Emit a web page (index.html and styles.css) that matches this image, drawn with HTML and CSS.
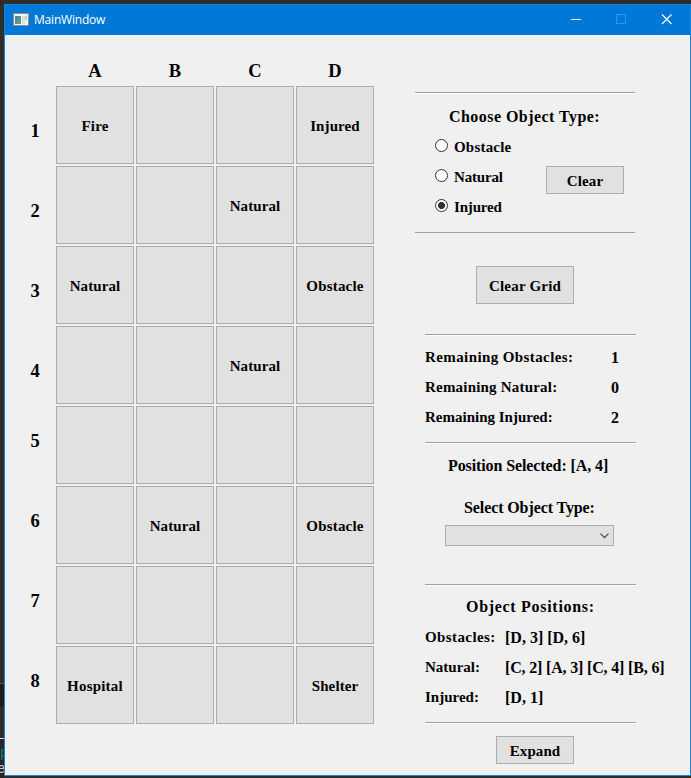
FILE: index.html
```html
<!DOCTYPE html>
<html lang="en">
<head>
<meta charset="utf-8">
<title>MainWindow</title>
<link rel="stylesheet" href="styles.css">
</head>
<body>
<div class="behind"><span class="behind-p">p</span><span class="behind-e">e</span></div>
<div class="window">
  <header class="titlebar">
    <svg class="app-icon" width="16" height="14" viewBox="0 0 16 14">
      <defs><linearGradient id="g" x1="0" y1="0" x2="1" y2="1"><stop offset="0" stop-color="#5078a8"/><stop offset="1" stop-color="#5cae78"/></linearGradient></defs>
      <rect x="0.5" y="0.5" width="15" height="12" fill="#f4f4f4" stroke="#8b8f94"/>
      <rect x="2" y="3" width="6" height="8" fill="url(#g)"/>
      <rect x="9" y="3" width="3" height="8" fill="#dcdedd"/>
      <rect x="12" y="3" width="2" height="4" fill="#b4d8bc"/>
    </svg>
    <span class="title">MainWindow</span>
    <svg class="controls" width="110" height="12" viewBox="0 0 110 12">
      <path d="M0 5.5H10" stroke="#fff"/>
      <rect x="45.500" y="0.500" width="9" height="9" fill="none" stroke="#3394e1"/>
      <path d="M91 .5L100.500 10M100.500 .5L91 10" stroke="#fff" stroke-width="1.150"/>
    </svg>
  </header>
  <main class="content">
    <section class="board">
      <div class="cols"><span>A</span><span>B</span><span>C</span><span>D</span></div>
      <div class="rows"><span>1</span><span>2</span><span>3</span><span>4</span><span>5</span><span>6</span><span>7</span><span>8</span></div>
      <div class="cells">
        <button>Fire</button><button></button><button></button><button>Injured</button>
        <button></button><button></button><button>Natural</button><button></button>
        <button>Natural</button><button></button><button></button><button class="wide">Obstacle</button>
        <button></button><button></button><button>Natural</button><button></button>
        <button></button><button></button><button></button><button></button>
        <button></button><button>Natural</button><button></button><button class="wide">Obstacle</button>
        <button></button><button></button><button></button><button></button>
        <button class="wide">Hospital</button><button></button><button></button><button>Shelter</button>
      </div>
    </section>
    <aside class="side">
      <section class="choose">
        <h2 class="choose-title">Choose Object Type:</h2>
        <div class="choose-body">
          <div class="radios">
            <label class="wide"><i class="radio"></i>Obstacle</label>
            <label class="tight"><i class="radio"></i>Natural</label>
            <label class="tight"><i class="radio on"></i>Injured</label>
          </div>
          <button class="clear">Clear</button>
        </div>
      </section>
      <button class="clear-grid">Clear Grid</button>
      <section class="remaining">
        <div><span class="wider">Remaining Obstacles:</span><b>1</b></div>
        <div><span class="wide">Remaining Natural:</span><b>0</b></div>
        <div><span>Remaining Injured:</span><b>2</b></div>
      </section>
      <section class="select">
        <p class="selected">Position Selected: [A, 4]</p>
        <p class="select-label">Select Object Type:</p>
        <div class="combo"><svg width="9" height="6" viewBox="0 0 9 6"><path d="M.5 .7L4.500 4.700L8.500 .7" fill="none" stroke="#444" stroke-width="1.150"/></svg></div>
      </section>
      <section class="positions">
        <h2 class="positions-title">Object Positions:</h2>
        <div><span class="wider">Obstacles:</span><b>[D, 3] [D, 6]</b></div>
        <div><span>Natural:</span><b class="tight">[C, 2] [A, 3] [C, 4] [B, 6]</b></div>
        <div><span>Injured:</span><b>[D, 1]</b></div>
      </section>
      <button class="expand">Expand</button>
    </aside>
  </main>
</div>
</body>
</html>
```
FILE: styles.css
```css
* { box-sizing: border-box; }
body {
  margin: 0;
  width: 691px;
  height: 778px;
  overflow: hidden;
  position: relative;
  padding: 4px 0 0 4px;
  background: #2d2d2d;
  font: bold 15px/20px "Liberation Serif", serif;
  color: #000;
}
.behind {
  position: absolute;
  left: 0;
  top: 683px;
  width: 4px;
  height: 95px;
  overflow: hidden;
  border-top: 1px solid #555;
  background: linear-gradient(#1e1e1e 0 23px, #2d2d2d 23px 54px, #ddd 54px 55px, #252525 55px);
  font: 14px/16px "Liberation Mono", monospace;
}
.behind span { display: block; }
.behind-p { margin-top: 61px; color: #008080; }
.behind-e { margin-left: -3px; color: #ccc; }
.window {
  position: relative;
  width: 687px;
  height: 772px;
  border: 1px solid #1883d7;
  background: #f0f0f0;
}
.titlebar {
  display: flex;
  align-items: center;
  height: 30px;
  padding-left: 8px;
  background: #0078d7;
}
.title {
  margin-left: 5px;
  width: 537px;
  font: 12px/16px "Open Sans", sans-serif;
  letter-spacing: -.2px;
  color: #fff;
}
.content { display: flex; height: 740px; }
button {
  padding: 0;
  border: 1px solid #adadad;
  background: #e1e1e1;
  font: inherit;
  color: inherit;
  letter-spacing: .1px;
}
.board {
  display: grid;
  grid-template-columns: 51px 318px;
  grid-template-rows: 51px 638px;
  width: 410px;
  font-size: 15px;
}
.cols {
  grid-column: 2;
  display: grid;
  grid-template-columns: repeat(4, 80px);
  padding-top: 26px;
  text-align: center;
  font-size: 18.5px;
}
.cols span { width: 78px; }
.rows {
  display: flex;
  flex-direction: column;
  padding: 35px 0 0 20px;
  width: 40px;
  text-align: center;
  font-size: 18.5px;
}
.rows span { height: 20px; margin-bottom: 60px; }
.rows span:nth-child(4) { margin-bottom: 50px; }
.cells {
  display: grid;
  grid-template-columns: repeat(4, 78px);
  grid-auto-rows: 78px;
  gap: 2px;
}
.cells button { padding-top: 2px; }
.side {
  display: flex;
  flex-direction: column;
  align-items: flex-start;
  width: 270px;
  padding-top: 57px;
}
.side h2, .side p { margin: 0; font-size: 16px; white-space: nowrap; }
section.choose, .remaining, .select, .positions { border-top: 1px solid #a0a0a0; box-shadow: inset 0 1px #fff; }
.choose, .remaining, .positions { border-bottom: 1px solid #a0a0a0; box-shadow: inset 0 1px #fff, 0 1px #fff; }
.choose { width: 220px; height: 141px; padding: 14px 0 0 20px; }
.choose .choose-title { padding-left: 14px; letter-spacing: .45px; }
.choose-body { display: flex; margin-top: 10px; }
.radios { width: 111px; }
.radios label { display: flex; height: 30px; }
.radio {
  width: 13px;
  height: 13px;
  margin: 2px 6px 0 0;
  border: 1px solid #333;
  border-radius: 50%;
  background: #fff;
}
.radio.on { background: radial-gradient(circle, #333 0 3.2px, #fff 3.8px); }
.clear { width: 78px; height: 28px; margin-top: 29px; padding-top: 2px; }
.clear-grid { width: 98px; height: 38px; margin: 33px 0 30px 61px; padding-top: 2px; letter-spacing: .2px; }
.remaining, .select, .positions { width: 211px; margin-left: 10px; }
.remaining { height: 109px; padding-top: 12px; }
.remaining div, .positions div { display: flex; height: 30px; white-space: nowrap; }
.remaining span { width: 186px; }
.remaining b { padding-top: 1px; font-size: 16px; }
.select { height: 141px; border-top: 0; box-shadow: none; }
.select .selected { padding: 13px 0 0 23px; letter-spacing: -.1px; }
.select .select-label { padding: 22px 0 0 39px; letter-spacing: -.1px; }
.combo {
  display: flex;
  align-items: center;
  justify-content: flex-end;
  width: 169px;
  height: 21px;
  margin: 7px 0 0 20px;
  padding-right: 4px;
  border: 1px solid #adadad;
  background: #e1e1e1;
}
.positions { height: 139px; padding-top: 12px; }
.positions .positions-title { padding-left: 41px; margin-bottom: 10px; letter-spacing: .7px; }
.positions span { width: 80px; flex: none; }
.positions b { padding-top: 1px; font-size: 16px; }
.expand { width: 78px; height: 28px; margin: 13px 0 0 81px; padding-top: 2px; }
.wide { letter-spacing: .2px; }
.wider { letter-spacing: .4px; }
.tight { letter-spacing: -.17px; }
```
